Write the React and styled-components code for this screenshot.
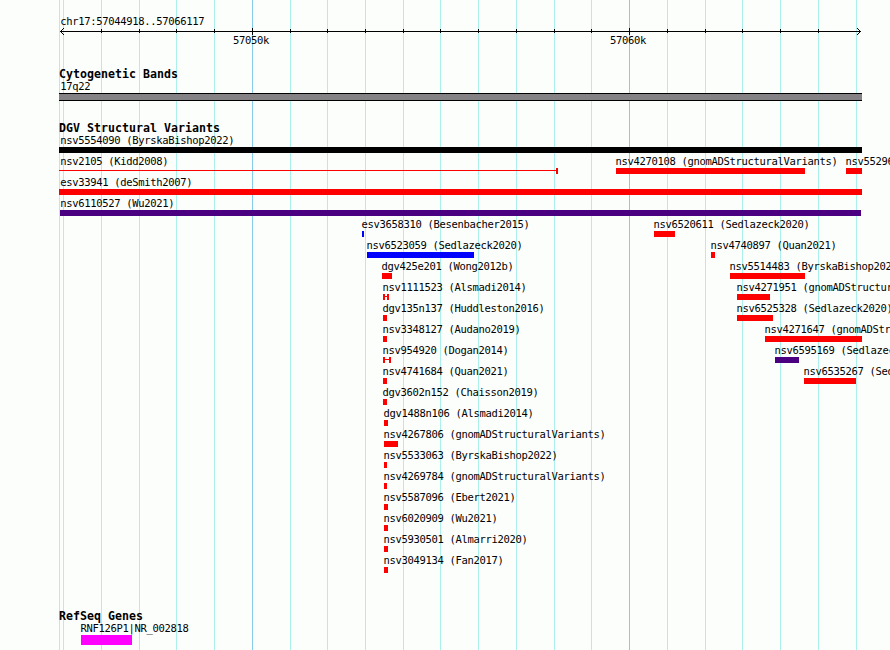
import styled, { createGlobalStyle } from 'styled-components';

const GlobalStyle = createGlobalStyle`
  body {
    margin: 0;
    background: #fcfefc;
    overflow: hidden;
  }
`;

const Browser = styled.div`
  display: grid;
  width: 890px;
  height: 650px;
  overflow: hidden;
  background: #fcfefc;
  color: #000;
  font-family: 'DejaVu Sans Mono', monospace;
`;

const Gridlines = styled.div`
  grid-area: 1 / 1;
  display: grid;
`;

const Gridline = styled.div`
  grid-area: 1 / 1;
  width: 1px;
  margin-left: ${p => p.$x}px;
  background: ${p => (p.$major ? '#84ceec' : '#acf0ec')};
`;

const Tracks = styled.main`
  grid-area: 1 / 1;
  z-index: 1;
  min-width: 0;
  display: flex;
  flex-direction: column;
`;

const Label = styled.span`
  display: block;
  height: 12px;
  font-size: 10.5px;
  line-height: 10px;
  letter-spacing: -0.32px;
  white-space: pre;
  margin-left: ${p => p.$shift || 0}px;
`;

const Scale = styled.header`
  height: 68px;
  padding-top: 16px;
  box-sizing: border-box;
`;

const Ruler = styled.svg`
  display: block;
  width: 890px;
  height: 7px;
  shape-rendering: crispEdges;
`;

const ScaleLabels = styled.div`
  display: grid;
`;

const ScaleLabel = styled(Label)`
  grid-area: 1 / 1;
  margin-left: ${p => p.$x}px;
`;

const Track = styled.section`
  height: ${p => p.$height}px;
`;

const TrackTitle = styled.h2`
  height: 13px;
  margin: 0 0 0 59px;
  font-size: 11.6px;
  line-height: 13px;
  letter-spacing: 0.016px;
  font-weight: bold;
  white-space: pre;
`;

const Row = styled.div`
  display: grid;
  height: 21px;
`;

const Feature = styled.div`
  grid-area: 1 / 1;
  margin-left: ${p => p.$x}px;
`;

const Bar = styled.div`
  box-sizing: border-box;
  width: ${p => p.$width}px;
  height: 6px;
  background: ${p => p.$color};
`;

const Band = styled(Bar)`
  height: 8px;
  border: solid #000;
  border-width: 1px 0;
`;

const Gene = styled(Bar)`
  height: 10px;
`;

// thin line with caps on the ends
const Span = styled(Bar)`
  border: solid ${p => p.$color};
  border-width: 0 2px 0 ${p => (p.$open ? 0 : 2)}px;
  background: linear-gradient(${p => p.$color}, ${p => p.$color}) 0 2px / 100% 1px no-repeat;
`;

const RED = '#ff0000';
const BLUE = '#0000ff';
const INDIGO = '#4b0082';

const lines = [
  59, 63, 101, 139, 176, 214, 252, 290, 327, 365, 403, 440, 478, 516, 554, 591,
  629, 667, 705, 742, 780, 818, 856
];
const majors = [252, 629];

// [name, start, end, color, type]
const rows = [
  [['nsv5554090 (ByrskaBishop2022)', 59, 862, '#000']],
  [
    ['nsv2105 (Kidd2008)', 59, 558, RED, 'open'],
    ['nsv4270108 (gnomADStructuralVariants)', 616, 805, RED],
    ['nsv55296', 846, 862, RED]
  ],
  [['esv33941 (deSmith2007)', 59, 862, RED]],
  [['nsv6110527 (Wu2021)', 60, 861, INDIGO]],
  [
    ['esv3658310 (Besenbacher2015)', 362, 364, BLUE],
    ['nsv6520611 (Sedlazeck2020)', 654, 675, RED]
  ],
  [
    ['nsv6523059 (Sedlazeck2020)', 367, 474, BLUE],
    ['nsv4740897 (Quan2021)', 711, 715, RED]
  ],
  [
    ['dgv425e201 (Wong2012b)', 382, 392, RED],
    ['nsv5514483 (ByrskaBishop2022)', 730, 805, RED]
  ],
  [
    ['nsv1111523 (Alsmadi2014)', 383, 389, RED, 'span'],
    ['nsv4271951 (gnomADStructuralVariants)', 737, 770, RED]
  ],
  [
    ['dgv135n137 (Huddleston2016)', 383, 387, RED],
    ['nsv6525328 (Sedlazeck2020)', 737, 773, RED]
  ],
  [
    ['nsv3348127 (Audano2019)', 383, 387, RED],
    ['nsv4271647 (gnomADStructuralVariants)', 765, 862, RED]
  ],
  [
    ['nsv954920 (Dogan2014)', 383, 391, RED, 'span'],
    ['nsv6595169 (Sedlazeck2020)', 775, 799, INDIGO]
  ],
  [
    ['nsv4741684 (Quan2021)', 383, 387, RED],
    ['nsv6535267 (Sedlazeck2020)', 804, 856, RED]
  ],
  [['dgv3602n152 (Chaisson2019)', 383, 387, RED]],
  [['dgv1488n106 (Alsmadi2014)', 384, 388, RED]],
  [['nsv4267806 (gnomADStructuralVariants)', 384, 398, RED]],
  [['nsv5533063 (ByrskaBishop2022)', 384, 387, RED]],
  [['nsv4269784 (gnomADStructuralVariants)', 384, 387, RED]],
  [['nsv5587096 (Ebert2021)', 384, 388, RED]],
  [['nsv6020909 (Wu2021)', 384, 388, RED]],
  [['nsv5930501 (Almarri2020)', 384, 388, RED]],
  [['nsv3049134 (Fan2017)', 384, 388, RED]]
];

function Variant({ name, start, end, color, type }) {
  const Shape = type ? Span : Bar;
  // labels never start left of the panel edge
  const shift = Math.max(60.3 - start, -0.6);

  return (
    <Feature $x={start}>
      <Label $shift={shift}>{name}</Label>
      <Shape $width={end - start} $color={color} $open={type === 'open'} />
    </Feature>
  );
}

export default function App() {
  return (
    <>
      <GlobalStyle />
      <Browser>
        <Gridlines>
          {lines.map(x => (
            <Gridline key={x} $x={x} $major={majors.includes(x)} />
          ))}
        </Gridlines>

        <Tracks>
          <Scale>
            <ScaleLabel $x={60.3}>chr17:57044918..57066117</ScaleLabel>
            <Ruler viewBox="0 1 890 7">
              <rect x="60" y="4" width="801" height="1" />
              {lines.slice(2, -1).map(x => {
                const major = majors.includes(x);
                return (
                  <rect
                    key={x}
                    x={x}
                    y={major ? 1 : 2}
                    width="1"
                    height={major ? 7 : 4}
                  />
                );
              })}
              {/* arrow heads, one pixel per step */}
              {[1, 2, 3].map(i => (
                <g key={i}>
                  <rect x={60 + i} y={4 - i} width="1" height="1" />
                  <rect x={60 + i} y={4 + i} width="1" height="1" />
                  <rect x={860 - i} y={4 - i} width="1" height="1" />
                  <rect x={860 - i} y={4 + i} width="1" height="1" />
                </g>
              ))}
            </Ruler>
            <ScaleLabels>
              <ScaleLabel $x={233}>57050k</ScaleLabel>
              <ScaleLabel $x={610}>57060k</ScaleLabel>
            </ScaleLabels>
          </Scale>

          <Track $height={54}>
            <TrackTitle>Cytogenetic Bands</TrackTitle>
            <Feature $x={59}>
              <Label $shift={1.3}>17q22</Label>
              <Band $width={803} $color="#848284" />
            </Feature>
          </Track>

          <Track $height={488}>
            <TrackTitle>DGV Structural Variants</TrackTitle>
            {rows.map(row => (
              <Row key={row[0][0]}>
                {row.map(([name, start, end, color, type]) => (
                  <Variant
                    key={name}
                    name={name}
                    start={start}
                    end={end}
                    color={color}
                    type={type}
                  />
                ))}
              </Row>
            ))}
          </Track>

          <Track $height={40}>
            <TrackTitle>RefSeq Genes</TrackTitle>
            <Feature $x={81}>
              <Label $shift={-0.6}>RNF126P1|NR_002818</Label>
              <Gene $width={51} $color="#ff00ff" />
            </Feature>
          </Track>
        </Tracks>
      </Browser>
    </>
  );
}
